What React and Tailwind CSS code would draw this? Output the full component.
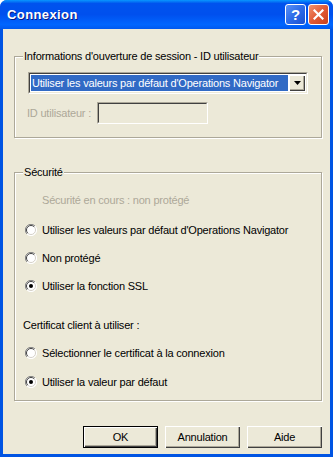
import React from "react";

function Radio({ checked }) {
  return (
    <span className="relative inline-block w-[12px] h-[12px] shrink-0">
      <svg width="12" height="12" viewBox="0 0 12 12" className="block">
        <circle cx="6" cy="6" r="5.5" fill="#fff" />
        <path d="M10 2 A5.5 5.5 0 0 0 2 10" stroke="#808080" strokeWidth="1" fill="none" />
        <path d="M9.2 2.8 A4.5 4.5 0 0 0 2.8 9.2" stroke="#404040" strokeWidth="1" fill="none" />
        <path d="M2 10 A5.5 5.5 0 0 0 10 2" stroke="#fff" strokeWidth="1" fill="none" />
        <path d="M2.8 9.2 A4.5 4.5 0 0 0 9.2 2.8" stroke="#d4d0c8" strokeWidth="1" fill="none" />
        {checked && <circle cx="6" cy="6" r="2" fill="#000" />}
      </svg>
    </span>
  );
}

function RadioRow({ checked, label, className }) {
  return (
    <div className={"flex items-center h-[20px] pl-[10px] " + className}>
      <Radio checked={checked} />
      <span className="ml-[5px] whitespace-nowrap">{label}</span>
    </div>
  );
}

function Btn({ children, isDefault }) {
  return (
    <div
      className={
        "w-[75px] h-[22px] flex items-center justify-center bg-[#ECE9D8] " +
        (isDefault
          ? "border border-black shadow-[inset_1px_1px_0_#fff,inset_-1px_-1px_0_#404040,inset_-2px_-2px_0_#aca899]"
          : "shadow-[inset_1px_1px_0_#fff,inset_-1px_-1px_0_#404040,inset_-2px_-2px_0_#aca899]")
      }
    >
      {children}
    </div>
  );
}

export default function App() {
  return (
    <div
      className="w-[333px] h-[457px] flex flex-col bg-[#0054E3] rounded-t-[7px] overflow-hidden text-[11px] tracking-[-0.2px] text-black"
      style={{ fontFamily: '"Liberation Sans", Arial, sans-serif' }}
    >
      {/* Title bar */}
      <div className="h-[29px] shrink-0 flex items-center pl-[7px] pr-[4px] bg-[linear-gradient(to_bottom,#0997FF_0%,#0053EE_12%,#0050EE_50%,#0066FF_85%,#0058EE_100%)]">
        <span className="text-white font-bold text-[13px] [text-shadow:1px_1px_0_#0A1883] tracking-[0.4px]">
          Connexion
        </span>
        <div className="ml-auto flex gap-[2px] items-center">
          <div className="w-[21px] h-[21px] rounded-[3px] border border-white bg-[linear-gradient(135deg,#5A91F6_0%,#2D6BE8_50%,#1A50D0_100%)] flex items-center justify-center">
            <span className="text-white font-bold text-[15px] leading-none">?</span>
          </div>
          <div className="w-[21px] h-[21px] rounded-[3px] border border-white bg-[linear-gradient(135deg,#F0936E_0%,#E25A35_50%,#C8401C_100%)] flex items-center justify-center">
            <svg width="11" height="11" viewBox="0 0 11 11">
              <path d="M1.5 1.5 L9.5 9.5 M9.5 1.5 L1.5 9.5" stroke="#fff" strokeWidth="2.2" strokeLinecap="square" />
            </svg>
          </div>
        </div>
      </div>

      {/* Body */}
      <div className="flex-1 mx-[3px] mb-[3px] bg-[#ECE9D8] flex flex-col px-[11px]">
        {/* Group 1 */}
        <div className="relative mt-[27px] h-[82px] w-[308px] border border-[#ACA899] shadow-[inset_1px_1px_0_#fff,1px_1px_0_#fff]">
          <span className="absolute left-[8px] top-[-8px] bg-[#ECE9D8] px-[1px] leading-[14px] whitespace-nowrap">
            Informations d'ouverture de session - ID utilisateur
          </span>
          <div className="mt-[15px] ml-[13px] w-[280px] h-[22px] bg-white flex border border-t-[#ACA899] border-l-[#ACA899] border-b-white border-r-white">
            <div className="flex-1 flex p-[1px] border border-t-[#404040] border-l-[#404040] border-b-[#ECE9D8] border-r-[#ECE9D8]">
              <div className="flex-1 bg-[#316AC5] text-white flex items-center pl-[1px] mr-[1px] whitespace-nowrap overflow-hidden">
                Utiliser les valeurs par défaut d'Operations Navigator
              </div>
              <div className="w-[16px] bg-[#ECE9D8] flex items-center justify-center shadow-[inset_1px_1px_0_#fff,inset_-1px_-1px_0_#404040,inset_-2px_-2px_0_#aca899]">
                <svg width="7" height="4" viewBox="0 0 7 4">
                  <path d="M0 0 H7 L3.5 4 Z" fill="#000" />
                </svg>
              </div>
            </div>
          </div>
          <div className="flex items-center mt-[8px] ml-[12px]">
            <span className="text-[#ACA899] w-[70px] whitespace-nowrap">ID utilisateur :</span>
            <div className="w-[111px] h-[22px] border border-t-[#ACA899] border-l-[#ACA899] border-b-white border-r-white">
              <div className="w-full h-full border border-t-[#404040] border-l-[#404040] border-b-[#ECE9D8] border-r-[#ECE9D8]" />
            </div>
          </div>
        </div>

        {/* Group 2 */}
        <div className="relative mt-[34px] h-[229px] w-[308px] border border-[#ACA899] shadow-[inset_1px_1px_0_#fff,1px_1px_0_#fff]">
          <span className="absolute left-[8px] top-[-8px] bg-[#ECE9D8] px-[1px] leading-[14px]">
            Sécurité
          </span>
          <div className="flex items-center h-[20px] mt-[17px] pl-[27px] text-[#ACA899]">
            Sécurité en cours : non protégé
          </div>
          <RadioRow className="mt-[10px]" label="Utiliser les valeurs par défaut d'Operations Navigator" />
          <RadioRow className="mt-[8px]" label="Non protégé" />
          <RadioRow className="mt-[8px]" checked label="Utiliser la fonction SSL" />
          <div className="flex items-center h-[20px] mt-[19px] pl-[8px]">Certificat client à utiliser :</div>
          <RadioRow className="mt-[8px]" label="Sélectionner le certificat à la connexion" />
          <RadioRow className="mt-[9px]" checked label="Utiliser la valeur par défaut" />
        </div>

        {/* Buttons */}
        <div className="flex justify-end gap-[7px] mt-[25px] w-[308px]">
          <Btn isDefault>OK</Btn>
          <Btn>Annulation</Btn>
          <Btn>Aide</Btn>
        </div>
      </div>
    </div>
  );
}
